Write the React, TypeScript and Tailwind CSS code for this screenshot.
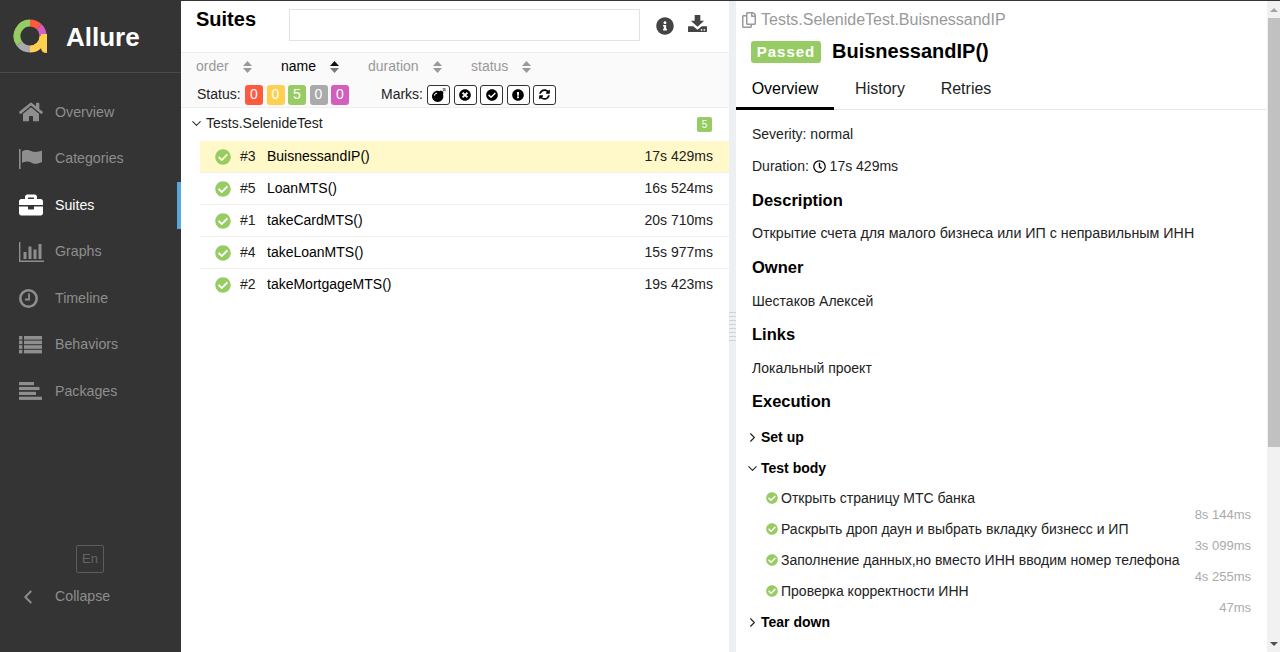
import type { ReactNode } from 'react'
import { ChevronDown, ChevronLeft, ChevronRight } from 'lucide-react'
import {
  FaHome,
  FaBriefcase,
  FaRegClock,
  FaCheckCircle,
  FaInfoCircle,
  FaBomb,
  FaTimesCircle,
  FaExclamationCircle,
  FaSyncAlt,
  FaRegCopy,
} from 'react-icons/fa'

function Logo() {
  return (
    <svg width="36" height="36" viewBox="0 0 36 36" fill="none" strokeWidth="7">
      <path d="M17 4A13 13 0 0 1 26.2 7.8" stroke="#fd5a3e" />
      <path d="M26.2 7.8A13 13 0 0 1 30 17" stroke="#d35ebe" />
      <path d="M30 17A13 13 0 0 1 17 30" stroke="#ffd050" />
      <path d="M31 15V28.5Q31 31 34 31" stroke="#ffd050" strokeWidth="6" />
      <path d="M17 30A13 13 0 0 1 6.35 24.46" stroke="#aaaaaa" />
      <path d="M6.35 24.46A13 13 0 0 1 17 4" stroke="#97cc64" />
    </svg>
  )
}

function FlagIcon() {
  return (
    <svg width="24" height="20" viewBox="0 0 24 20" fill="currentColor">
      <rect x="0" y="0" width="1.6" height="20" />
      <path d="M3 2.5C7 0 10 1 12 2S18 3.5 23 1.5V13C18 15.5 15 15 12 13.5S7 12 3 14Z" />
    </svg>
  )
}

function BarsIcon() {
  return (
    <svg width="25" height="20" viewBox="0 0 25 20" fill="currentColor">
      <path d="M0 0H1.4V18.6H25V20H0Z" />
      <rect x="4.5" y="10" width="3" height="7" />
      <rect x="9.5" y="4.5" width="3" height="12.5" />
      <rect x="14.5" y="7.5" width="3" height="9.5" />
      <rect x="19.5" y="2" width="3" height="15" />
    </svg>
  )
}

function ClockIcon() {
  return (
    <svg width="19" height="19" viewBox="0 0 19 19" fill="none" stroke="currentColor">
      <circle cx="9.5" cy="9.5" r="8.2" strokeWidth="2.6" />
      <path d="M10 4.5V10.5H6" strokeWidth="1.8" />
    </svg>
  )
}

function RowsIcon() {
  return (
    <svg width="23" height="18" viewBox="0 0 23 18" fill="currentColor">
      {[0, 4.6, 9.2, 13.8].map((y) => (
        <g key={y}>
          <rect x="0" y={y} width="3.4" height="3.6" />
          <rect x="5" y={y} width="18" height="3.6" />
        </g>
      ))}
    </svg>
  )
}

function AlignIcon() {
  return (
    <svg width="23" height="18" viewBox="0 0 23 18" fill="currentColor">
      <rect x="0" y="0" width="15" height="3.2" />
      <rect x="0" y="4.9" width="20.5" height="3.2" />
      <rect x="0" y="9.8" width="17" height="3.2" />
      <rect x="0" y="14.7" width="23" height="3.2" />
    </svg>
  )
}

function DownloadIcon() {
  return (
    <svg width="19" height="17" viewBox="0 0 20 18" fill="currentColor">
      <path d="M7 0H13V6H17L10 12.5L3 6H7Z" />
      <path d="M0 12H5.5L10 15.5L14.5 12H20V18H0Z" />
      <rect x="13.5" y="15" width="1.6" height="1.6" fill="#fff" />
      <rect x="16.5" y="15" width="1.6" height="1.6" fill="#fff" />
    </svg>
  )
}

function SortIcon({ dark = false }: { dark?: boolean }) {
  return (
    <svg width="9" height="12" viewBox="0 0 9 12" className="shrink-0">
      <path d="M4.5 0L9 5H0Z" fill={dark ? '#111111' : '#999999'} />
      <path d="M4.5 12L0 7H9Z" fill={dark ? '#777777' : '#999999'} />
    </svg>
  )
}

const navItems: { label: string; icon: ReactNode; active?: boolean }[] = [
  { label: 'Overview', icon: <FaHome size={24} /> },
  { label: 'Categories', icon: <FlagIcon /> },
  { label: 'Suites', icon: <FaBriefcase size={24} />, active: true },
  { label: 'Graphs', icon: <BarsIcon /> },
  { label: 'Timeline', icon: <ClockIcon /> },
  { label: 'Behaviors', icon: <RowsIcon /> },
  { label: 'Packages', icon: <AlignIcon /> },
]

function Sidebar() {
  return (
    <aside className="w-[181px] shrink-0 h-full bg-[#343434] flex flex-col text-[14.2px]">
      <div className="h-[72px] shrink-0 flex items-center border-b border-[#4a4a4a] pl-[13px]">
        <Logo />
        <span className="ml-[17px] pt-[2px] text-white font-bold text-[26px]">Allure</span>
      </div>
      <nav className="pt-[16px]">
        {navItems.map((item) => (
          <div
            key={item.label}
            className={`h-[46.5px] flex items-center pl-[19px] border-r-[4px] ${
              item.active ? 'text-white border-[#5aa7e0]' : 'text-[#8e8e8e] border-transparent'
            }`}
          >
            <span className="w-[36px] flex items-center">{item.icon}</span>
            <span>{item.label}</span>
          </div>
        ))}
      </nav>
      <div className="mt-auto pb-[44px]">
        <div className="ml-[76px] w-[28px] h-[28px] border border-[#5c5c5c] rounded-[2px] flex items-center justify-center text-[13px] text-[#666666]">
          En
        </div>
        <div className="mt-[13px] h-[22px] flex items-center text-[#8e8e8e]">
          <span className="w-[55px] pl-[17px] flex items-center">
            <ChevronLeft size={22} strokeWidth={2} />
          </span>
          <span>Collapse</span>
        </div>
      </div>
    </aside>
  )
}

const sorters = [
  { label: 'order', width: 'w-[85px]', labelWidth: 'w-[47px]' },
  { label: 'name', width: 'w-[87px]', labelWidth: 'w-[49px]', active: true },
  { label: 'duration', width: 'w-[103px]', labelWidth: 'w-[65px]' },
  { label: 'status', width: 'w-[70px]', labelWidth: 'w-[51px]' },
]

const statuses = [
  { count: 0, color: 'bg-[#fd5a3e]' },
  { count: 0, color: 'bg-[#ffd050]' },
  { count: 5, color: 'bg-[#97cc64]' },
  { count: 0, color: 'bg-[#aaaaaa]' },
  { count: 0, color: 'bg-[#d35ebe]' },
]

const marks = [
  <FaBomb size={14} />,
  <FaTimesCircle size={12} />,
  <FaCheckCircle size={12} />,
  <FaExclamationCircle size={12} />,
  <FaSyncAlt size={11} />,
]

const tests = [
  { id: '#3', name: 'BuisnessandIP()', time: '17s 429ms', selected: true },
  { id: '#5', name: 'LoanMTS()', time: '16s 524ms' },
  { id: '#1', name: 'takeCardMTS()', time: '20s 710ms' },
  { id: '#4', name: 'takeLoanMTS()', time: '15s 977ms' },
  { id: '#2', name: 'takeMortgageMTS()', time: '19s 423ms' },
]

function SuitesPane() {
  return (
    <section className="w-[548px] shrink-0 h-full bg-white flex flex-col text-[14px] text-[#222222]">
      <div className="h-[52px] shrink-0 flex items-start pl-[15px] border-b border-[#eeeeee]">
        <h2 className="w-[93px] mt-[5px] text-[20px] leading-[26px] font-bold text-black">Suites</h2>
        <div className="mt-[8px] w-[351px] h-[32px] border border-[#e3e3e3] bg-white" />
        <div className="mt-[16px] ml-[16px] w-[32px] text-[#444444]">
          <FaInfoCircle size={18} />
        </div>
        <div className="mt-[14px] text-[#444444]">
          <DownloadIcon />
        </div>
      </div>
      <div className="h-[55px] shrink-0 bg-[#fafafa] border-b border-[#eeeeee] pl-[15px] flex flex-col">
        <div className="h-[27px] flex items-center">
          {sorters.map((s) => (
            <div
              key={s.label}
              className={`${s.width} shrink-0 flex items-center ${s.active ? 'text-black' : 'text-[#999999]'}`}
            >
              <span className={s.labelWidth}>{s.label}</span>
              <SortIcon dark={s.active} />
            </div>
          ))}
        </div>
        <div className="mt-[4px] h-[21px] flex items-center">
          <span className="w-[49px] pl-[1px]">Status:</span>
          <div className="flex gap-[3.5px]">
            {statuses.map((s, i) => (
              <span
                key={i}
                className={`w-[18px] h-[20px] rounded-[3px] ${s.color} text-white flex items-center justify-center`}
              >
                {s.count}
              </span>
            ))}
          </div>
          <span className="ml-[32px] w-[46px]">Marks:</span>
          <div className="flex gap-[3.5px]">
            {marks.map((icon, i) => (
              <span
                key={i}
                className="w-[23px] h-[20px] rounded-[3px] border border-[#333333] bg-white text-black flex items-center justify-center"
              >
                {icon}
              </span>
            ))}
          </div>
        </div>
      </div>
      <div className="h-[33px] shrink-0 flex items-center pl-[8px] pr-[17px]">
        <ChevronDown size={15} strokeWidth={1.75} className="text-[#333333] -mt-[2px]" />
        <span className="ml-[2px] -mt-[2px]">Tests.SelenideTest</span>
        <span className="ml-auto w-[15px] h-[15px] rounded-[2px] bg-[#97cc64] text-white text-[10px] flex items-center justify-center">
          5
        </span>
      </div>
      <div className="pl-[19px]">
        {tests.map((t, i) => (
          <div
            key={t.id}
            className={`h-[32px] flex items-center pl-[15px] pr-[16px] border-b ${
              i < tests.length - 1 ? 'border-[#efefef]' : 'border-transparent'
            } ${t.selected ? 'bg-[#fff8c9]' : ''}`}
          >
            <FaCheckCircle size={16} className="text-[#97cc64]" />
            <span className="ml-[9px] w-[27px]">{t.id}</span>
            <span className="text-black">{t.name}</span>
            <span className="ml-auto">{t.time}</span>
          </div>
        ))}
      </div>
    </section>
  )
}

function Gutter() {
  return (
    <div className="w-[7px] shrink-0 h-full bg-[#ecf0f3] flex flex-col items-center justify-center gap-[3px]">
      {Array.from({ length: 8 }).map((_, i) => (
        <div key={i} className="w-[7px] h-[1px] bg-[#cdd3d8]" />
      ))}
    </div>
  )
}

const steps = [
  { name: 'Открыть страницу МТС банка', time: '8s 144ms' },
  { name: 'Раскрыть дроп даун и выбрать вкладку бизнесс и ИП', time: '3s 099ms' },
  { name: 'Заполнение данных,но вместо ИНН вводим номер телефона', time: '4s 255ms' },
  { name: 'Проверка корректности ИНН', time: '47ms' },
]

function Heading({ children }: { children: ReactNode }) {
  return <h3 className="h-[33px] flex items-center text-[16.5px] font-bold text-black">{children}</h3>
}

function Line({ children }: { children: ReactNode }) {
  return <p className="h-[34px] flex items-center">{children}</p>
}

function StageTitle({ open = false, children }: { open?: boolean; children: ReactNode }) {
  return (
    <div className="h-[31px] flex items-center font-bold text-black -ml-[7px]">
      <span className="w-[16px] flex items-center text-[#222222]">
        {open ? <ChevronDown size={15} strokeWidth={1.75} /> : <ChevronRight size={15} strokeWidth={1.75} />}
      </span>
      {children}
    </div>
  )
}

function DetailPane() {
  return (
    <section className="flex-1 min-w-0 h-full bg-white flex flex-col text-[14px] text-[#222222] overflow-hidden">
      <div className="h-[109px] shrink-0">
        <div className="pl-[5px] pt-[8px] h-[30px] flex items-center text-[#999999] text-[16px]">
          <FaRegCopy size={16} className="mr-[4px]" />
          Tests.SelenideTest.BuisnessandIP
        </div>
        <div className="pl-[15px] mt-[9px] flex items-center h-[24px]">
          <span className="w-[70px] h-[22px] rounded-[3px] bg-[#97cc64] text-white text-[15px] font-bold tracking-[1px] flex items-center justify-center">
            Passed
          </span>
          <span className="ml-[11px] pb-[3px] text-[20px] font-bold text-black">BuisnessandIP()</span>
        </div>
        <div className="flex h-[46px] text-[16px] border-b border-[#e8e8e8] items-center">
          <span className="w-[98px] h-[46px] flex items-center justify-center border-b-[3px] border-black pt-[8px] text-black">
            Overview
          </span>
          <span className="w-[92px] text-center pt-[5px]">History</span>
          <span className="w-[80px] text-center pt-[5px]">Retries</span>
        </div>
      </div>
      <div className="pl-[16px] pr-[16px] pt-[7px]">
        <Line>Severity: normal</Line>
        <p className="h-[33px] pb-[2px] flex items-center">
          Duration:&nbsp;
          <FaRegClock size={13} className="text-black" />
          &nbsp;17s 429ms
        </p>
        <Heading>Description</Heading>
        <p className="h-[34px] flex items-center text-[14.25px]">
          Открытие счета для малого бизнеса или ИП с неправильным ИНН
        </p>
        <Heading>Owner</Heading>
        <Line>Шестаков Алексей</Line>
        <Heading>Links</Heading>
        <Line>Локальный проект</Line>
        <Heading>Execution</Heading>
        <div className="mt-[4px]">
          <StageTitle>Set up</StageTitle>
          <StageTitle open>Test body</StageTitle>
          <div className="-mt-[1px]">
            {steps.map((s) => (
              <div key={s.name} className="h-[31px] flex items-start pl-[14px] pt-[7px] leading-[16px]">
                <FaCheckCircle size={12} className="text-[#97cc64] mt-[2px] mr-[3px] shrink-0" />
                <span className="whitespace-nowrap">{s.name}</span>
                <span className="ml-auto pt-[17px] text-[13px] text-[#aaaaaa] whitespace-nowrap">{s.time}</span>
              </div>
            ))}
          </div>
          <StageTitle>Tear down</StageTitle>
        </div>
      </div>
    </section>
  )
}

function Scrollbar() {
  return (
    <div className="w-[13px] shrink-0 h-full bg-[#f1f1f1] flex flex-col">
      <div className="h-[17px] flex items-center justify-center">
        <div className="w-0 h-0 border-x-[4px] border-x-transparent border-b-[4px] border-b-[#a3a3a3]" />
      </div>
      <div className="h-[429px] ml-[1px] bg-[#c1c1c1]" />
      <div className="mt-auto h-[17px] flex items-center justify-center">
        <div className="w-0 h-0 border-x-[4px] border-x-transparent border-t-[4px] border-t-[#505050]" />
      </div>
    </div>
  )
}

export default function App() {
  return (
    <div className="h-screen w-full flex overflow-hidden border-t border-[#343434] font-['Liberation_Sans',Arial,sans-serif]">
      <Sidebar />
      <SuitesPane />
      <Gutter />
      <DetailPane />
      <Scrollbar />
    </div>
  )
}
